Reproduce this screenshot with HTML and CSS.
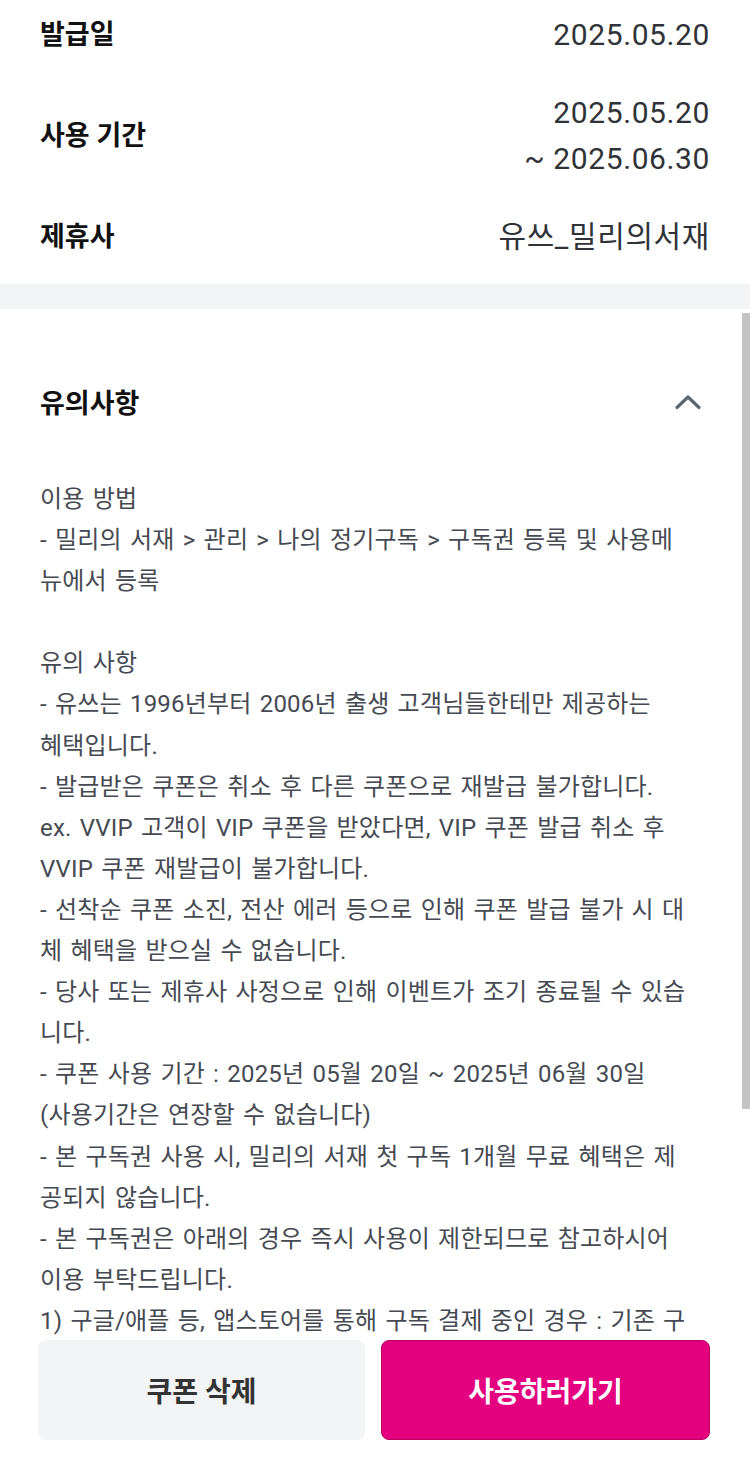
FILE: index.html
```html
<!DOCTYPE html>
<html lang="ko">
<head>
<meta charset="utf-8">
<title>쿠폰 상세</title>
<link rel="stylesheet" href="styles.css">
</head>
<body>
<div class="page">
  <section class="info">
    <div class="row">
      <div class="label">발급일</div>
      <div class="value">2025.05.20</div>
    </div>
    <div class="row">
      <div class="label">사용 기간</div>
      <div class="value">2025.05.20<br>~ 2025.06.30</div>
    </div>
    <div class="row">
      <div class="label">제휴사</div>
      <div class="value">유쓰_밀리의서재</div>
    </div>
  </section>
  <div class="divider"></div>
  <section class="notice">
    <div class="notice-head">
      <h2 class="notice-title">유의사항</h2>
      <svg class="chevron" width="28" height="16" viewBox="0 0 28 16" aria-hidden="true">
        <polyline points="3,13.5 14,3 25,13.5" fill="none" stroke="#5f6670" stroke-width="3.2" stroke-linecap="round" stroke-linejoin="round"/>
      </svg>
    </div>
    <div class="notice-body">이용 방법<br>- 밀리의 서재 &gt; 관리 &gt; 나의 정기구독 &gt; 구독권 등록 및 사용메<br>뉴에서 등록<br><br>유의 사항<br>- 유쓰는 1996년부터 2006년 출생 고객님들한테만 제공하는<br>혜택입니다.<br>- 발급받은 쿠폰은 취소 후 다른 쿠폰으로 재발급 불가합니다.<br>ex. VVIP 고객이 VIP 쿠폰을 받았다면, VIP 쿠폰 발급 취소 후<br>VVIP 쿠폰 재발급이 불가합니다.<br>- 선착순 쿠폰 소진, 전산 에러 등으로 인해 쿠폰 발급 불가 시 대<br>체 혜택을 받으실 수 없습니다.<br>- 당사 또는 제휴사 사정으로 인해 이벤트가 조기 종료될 수 있습<br>니다.<br>- 쿠폰 사용 기간 : 2025년 05월 20일 ~ 2025년 06월 30일<br>(사용기간은 연장할 수 없습니다)<br>- 본 구독권 사용 시, 밀리의 서재 첫 구독 1개월 무료 혜택은 제<br>공되지 않습니다.<br>- 본 구독권은 아래의 경우 즉시 사용이 제한되므로 참고하시어<br>이용 부탁드립니다.<br>1) 구글/애플 등, 앱스토어를 통해 구독 결제 중인 경우 : 기존 구</div>
  </section>
  <div class="scroll-thumb"></div>
</div>
<div class="bottom-bar">
  <button class="btn btn-delete" type="button">쿠폰 삭제</button>
  <button class="btn btn-use" type="button">사용하러가기</button>
</div>
</body>
</html>
```

FILE: styles.css
```css
* {
  box-sizing: border-box;
}

html, body {
  margin: 0;
  padding: 0;
  background: #ffffff;
}

body {
  font-family: Roboto, "Noto Sans CJK KR", "Noto Sans", sans-serif;
  color: #111111;
  overflow: hidden;
  height: 1480px;
}

.page {
  position: relative;
}

.info {
  padding: 12px 40px 24px 40px;
  display: flex;
  flex-direction: column;
  gap: 32px;
}

.row {
  display: flex;
  justify-content: space-between;
  align-items: center;
}

.label {
  font-size: 27px;
  font-weight: 700;
  line-height: 46px;
  color: #111111;
}

.value {
  font-size: 30px;
  font-weight: 400;
  line-height: 46px;
  letter-spacing: 0.6px;
  color: #2f3338;
  text-align: right;
}

.divider {
  height: 25px;
  background: #f2f3f5;
}

.notice {
  padding: 75px 40px 0 40px;
}

.notice-head {
  display: flex;
  justify-content: space-between;
  align-items: center;
  height: 40px;
}

.notice-title {
  margin: 0;
  font-size: 27px;
  font-weight: 700;
  line-height: 40px;
  color: #111111;
}

.chevron {
  margin-right: 8px;
  margin-top: -4px;
}

.notice-body {
  margin-top: 55px;
  font-size: 24px;
  line-height: 41.1px;
  letter-spacing: 0.2px;
  word-spacing: 2px;
  color: #454a52;
  white-space: nowrap;
}

.scroll-thumb {
  position: absolute;
  right: 0;
  top: 313px;
  width: 8px;
  height: 796px;
  background: #c4c4c4;
}

.bottom-bar {
  position: fixed;
  left: 0;
  right: 0;
  bottom: 0;
  height: 142px;
  padding: 2px 40px 40px 38px;
  background: #ffffff;
  display: flex;
  gap: 16px;
}

.btn {
  flex: 1;
  height: 100px;
  border-radius: 8px;
  font-family: Roboto, "Noto Sans CJK KR", sans-serif;
  font-size: 28px;
  font-weight: 700;
  border: none;
}

.btn-delete {
  background: #f3f4f6;
  color: #333333;
}

.btn-use {
  background: #e4007f;
  color: #ffffff;
  border: 1px solid #b8005f;
}
```
